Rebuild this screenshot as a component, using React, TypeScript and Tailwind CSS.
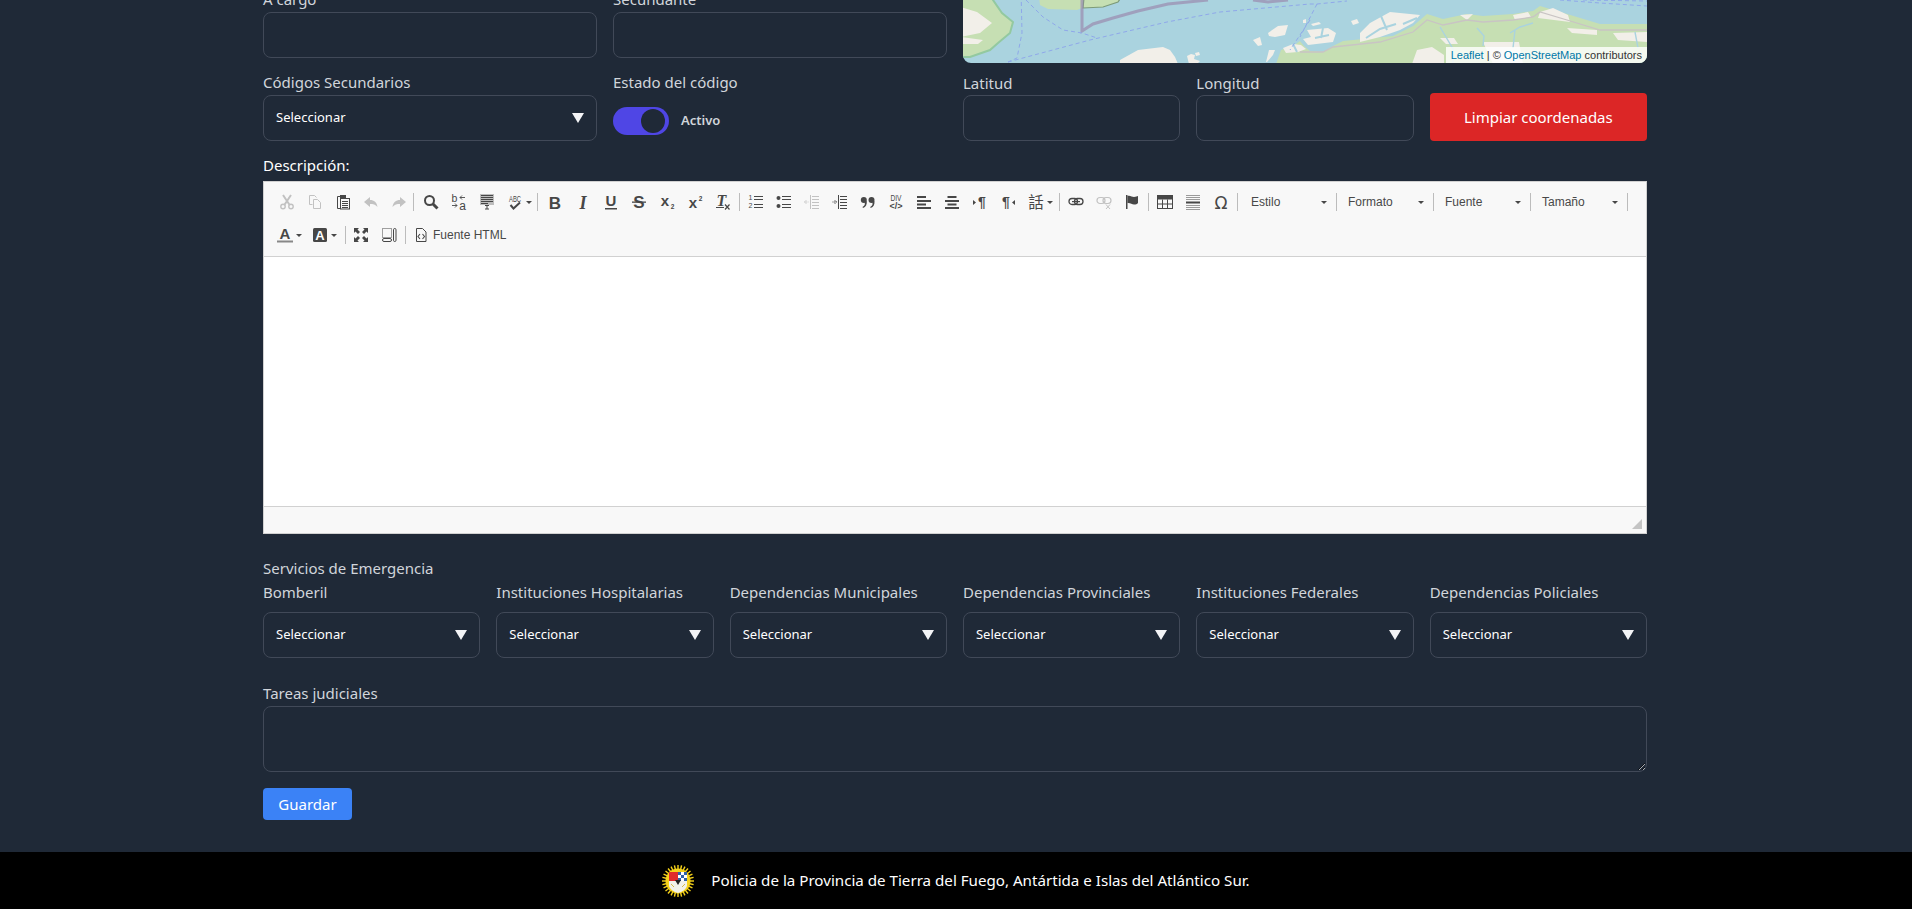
import React from "react";

const DARK = "#474747";
const MUTED = "#c2c2c2";

const Icon: React.FC<{ children: React.ReactNode; color?: string }> = ({ children, color = DARK }) => (
  <svg width="16" height="16" viewBox="0 0 16 16" fill={color} stroke="none" className="shrink-0">
    {children}
  </svg>
);

const Glyph: React.FC<{
  x: number;
  y: number;
  size: number;
  bold?: boolean;
  italic?: boolean;
  fit?: number;
  children: React.ReactNode;
  family?: string;
}> = ({ x, y, size, bold, italic, fit, children, family = "Liberation Sans, sans-serif" }) => (
  <text
    x={x}
    y={y}
    fontSize={size}
    fontWeight={bold ? 700 : 400}
    fontStyle={italic ? "italic" : "normal"}
    fontFamily={family}
    textAnchor="middle"
    textLength={fit}
    lengthAdjust={fit ? "spacingAndGlyphs" : undefined}
  >
    {children}
  </text>
);

const Caret = () => <span className="ml-[3px] h-0 w-0 border-x-[3px] border-t-[3px] border-x-transparent border-t-[#474747]" />;

const Tool: React.FC<{ children: React.ReactNode }> = ({ children }) => (
  <div className="flex h-7 w-7 shrink-0 items-center justify-center">{children}</div>
);

const ToolCaret: React.FC<{ children: React.ReactNode; className: string }> = ({ children, className }) => (
  <div className={`flex h-7 shrink-0 items-center ${className}`}>
    {children}
    <Caret />
  </div>
);

const Sep: React.FC<{ className?: string }> = ({ className = "mr-[3px]" }) => (
  <div className={`h-[18px] w-px shrink-0 bg-[#bcbcbc] ${className}`} />
);

const Combo: React.FC<{ label: string }> = ({ label }) => (
  <>
    <div className="flex h-7 w-[96px] shrink-0 items-center justify-between pl-[11px] pr-[9px] font-['Liberation_Sans'] text-xs text-[#484848]">
      <span>{label}</span>
      <span className="h-0 w-0 border-x-[3px] border-t-[3px] border-x-transparent border-t-[#474747]" />
    </div>
    <Sep className="" />
  </>
);

const Lines: React.FC<{ rows: [number, number, number][]; h?: number }> = ({ rows, h = 1 }) => (
  <>
    {rows.map(([x, y, w], i) => (
      <rect key={i} x={x} y={y} width={w} height={h} />
    ))}
  </>
);

const toolbarFirstRow = () => (
  <div className="flex h-7 items-center">
    <Tool>
      <Icon color={MUTED}>
        <g fill="none" stroke={MUTED} strokeWidth="1.4">
          <circle cx="4" cy="12.5" r="2.2" />
          <circle cx="12" cy="12.5" r="2.2" />
          <path d="M5.5 10.8 12 1M10.5 10.800 4 1" strokeWidth="2" />
        </g>
      </Icon>
    </Tool>
    <Tool>
      <Icon color={MUTED}>
        <path d="M2.500 1.500h5l2 2M2.500 1.500v9h3M6.500 5.500h4l3 3v6h-7z" fill="none" stroke={MUTED} />
      </Icon>
    </Tool>
    <Tool>
      <Icon>
        <path d="M5 2.500H2.500v12H5" fill="none" stroke={DARK} />
        <rect x="5" y="1" width="6" height="3" />
        <rect x="5.500" y="4.500" width="9" height="10.500" fill="none" stroke={DARK} />
        <Lines rows={[[7, 7, 6], [7, 9, 6], [7, 11, 6], [7, 13, 6]]} />
      </Icon>
    </Tool>
    <Tool>
      <Icon color={MUTED}>
        <path d="M7 3 1 8l6 5v-3c3 0 5.500.5 7.500 3C14 8.500 11 6 7 6z" />
      </Icon>
    </Tool>
    <Tool>
      <Icon color={MUTED}>
        <path d="M9 3l6 5-6 5v-3c-3 0-5.500.5-7.500 3C2 8.500 5 6 9 6z" />
      </Icon>
    </Tool>
    <Sep />
    <Tool>
      <Icon>
        <circle cx="6.500" cy="6.500" r="4.500" fill="none" stroke={DARK} strokeWidth="2" />
        <path d="M10 10l4.500 4.500" stroke={DARK} strokeWidth="3" />
      </Icon>
    </Tool>
    <Tool>
      <Icon>
        <Glyph x={3.500} y={8} size={10.500}>b</Glyph>
        <Glyph x={11.500} y={15.500} size={12}>a</Glyph>
        <path d="M9 3.500h5M9 3.500l2-2M9 3.500l2 2M1 11.500h5M6 11.500l-2-2M6 11.500l-2 2" fill="none" stroke={DARK} strokeWidth="0.900" />
      </Icon>
    </Tool>
    <Tool>
      <Icon>
        <rect x="1" y="0" width="14" height="11" fill="#bdbdbd" />
        <Lines rows={[[2, 1, 12], [2, 3, 12], [2, 5, 12], [2, 7, 12], [2, 9, 7]]} />
        <path d="M6 11.500h4M8 11.500v3.500M6 15h4" fill="none" stroke={DARK} />
      </Icon>
    </Tool>
    <ToolCaret className="w-9 pl-[6px]">
      <Icon>
        <Glyph x={8} y={7.500} size={9} fit={12}>ABC</Glyph>
        <path d="M3.500 11 6.500 14.500 13 8.500" fill="none" stroke={DARK} strokeWidth="2" />
      </Icon>
    </ToolCaret>
    <Sep />
    <Tool>
      <Icon>
        <Glyph x={8} y={14.500} size={17} bold>B</Glyph>
      </Icon>
    </Tool>
    <Tool>
      <Icon>
        <Glyph x={8} y={14.500} size={18} bold italic family="Liberation Serif, serif">I</Glyph>
      </Icon>
    </Tool>
    <Tool>
      <Icon>
        <Glyph x={8} y={12} size={15} bold>U</Glyph>
        <rect x="2" y="14" width="12" height="1.500" />
      </Icon>
    </Tool>
    <Tool>
      <Icon>
        <Glyph x={8} y={14} size={17} bold>S</Glyph>
        <rect x="1" y="7.500" width="14" height="1.300" />
      </Icon>
    </Tool>
    <Tool>
      <Icon>
        <Glyph x={6} y={12} size={15} bold>x</Glyph>
        <Glyph x={13.500} y={15} size={6.500} bold>2</Glyph>
      </Icon>
    </Tool>
    <Tool>
      <Icon>
        <Glyph x={6} y={14} size={15} bold>x</Glyph>
        <Glyph x={13.500} y={6.500} size={6.500} bold>2</Glyph>
      </Icon>
    </Tool>
    <Tool>
      <Icon>
        <Glyph x={6.500} y={11.500} size={16} bold italic family="Liberation Serif, serif">T</Glyph>
        <rect x="1" y="13" width="8" height="1" />
        <path d="M10 10.500l4.500 5M14.500 10.500 10 15.500" fill="none" stroke={DARK} strokeWidth="1.200" />
      </Icon>
    </Tool>
    <Sep className="ml-[2px] mr-[2px]" />
    <Tool>
      <Icon>
        <Glyph x={2.500} y={6} size={7}>1</Glyph>
        <Glyph x={2.500} y={14} size={7}>2</Glyph>
        <Lines rows={[[6, 2, 9], [6, 5, 9], [6, 10, 9], [6, 13, 9]]} />
      </Icon>
    </Tool>
    <Tool>
      <Icon>
        <circle cx="2.500" cy="4" r="2" />
        <circle cx="2.500" cy="12" r="2" />
        <Lines rows={[[6, 2, 9], [6, 5, 9], [6, 10, 9], [6, 13, 9]]} />
      </Icon>
    </Tool>
    <Tool>
      <Icon color={MUTED}>
        <Lines rows={[[8, 2, 7], [8, 5, 7], [8, 8, 7], [8, 11, 7], [8, 14, 7]]} />
        <rect x="6" y="1" width="1" height="14" />
        <path d="M0.500 8h4M0.500 8l2-2M0.500 8l2 2" fill="none" stroke={MUTED} strokeDasharray="1 0.600" />
      </Icon>
    </Tool>
    <Tool>
      <Icon>
        <Lines rows={[[8, 2, 7], [8, 5, 7], [8, 8, 7], [8, 11, 7], [8, 14, 7]]} />
        <rect x="6" y="1" width="1" height="14" />
        <path d="M0.500 8h4M4.500 8l-2-2M4.500 8l-2 2" fill="none" stroke={DARK} strokeDasharray="1 0.600" />
      </Icon>
    </Tool>
    <Tool>
      <Icon>
        <circle cx="3.800" cy="6" r="3" />
        <path d="M4.500 8.500C5.500 10 4.500 12 2.500 13L3 14C6 13 7 10.500 6.800 7z" />
        <circle cx="11.500" cy="6" r="3" />
        <path d="M12.200 8.500c1 1.500 0 3.500-2 4.500l.5 1c3-1 4-3.500 3.800-7z" />
      </Icon>
    </Tool>
    <Tool>
      <Icon>
        <Glyph x={8} y={7} size={9.500} fit={11}>DIV</Glyph>
        <Glyph x={8} y={15} size={8.500} bold fit={13}>{"</>"}</Glyph>
      </Icon>
    </Tool>
    <Tool>
      <Icon>
        <Lines h={2} rows={[[1, 2, 9], [1, 6, 14], [1, 9.500, 9], [1, 13, 14]]} />
      </Icon>
    </Tool>
    <Tool>
      <Icon>
        <Lines h={2} rows={[[3.500, 2, 9], [1, 6, 14], [3.500, 9.500, 9], [1, 13, 14]]} />
      </Icon>
    </Tool>
    <Tool>
      <Icon>
        <path d="M1 6l3 2.500L1 11z" />
        <Glyph x={10} y={13} size={14} bold>¶</Glyph>
      </Icon>
    </Tool>
    <Tool>
      <Icon>
        <path d="M15 6l-3 2.500 3 2.500z" />
        <Glyph x={6} y={13} size={14} bold>¶</Glyph>
      </Icon>
    </Tool>
    <ToolCaret className="w-9 pl-[6px]">
      <Icon>
        <Glyph x={8} y={14} size={15.500} family="Noto Sans CJK TC, sans-serif">話</Glyph>
      </Icon>
    </ToolCaret>
    <Sep className="ml-px mr-[2px]" />
    <Tool>
      <Icon>
        <rect x="1" y="4.500" width="8.500" height="6" rx="3" fill="none" stroke={DARK} strokeWidth="1.300" />
        <rect x="6.500" y="4.500" width="8.500" height="6" rx="3" fill="none" stroke={DARK} strokeWidth="1.300" />
        <rect x="4" y="7" width="8" height="1.200" />
      </Icon>
    </Tool>
    <Tool>
      <Icon color={MUTED}>
        <rect x="1" y="3.500" width="8" height="6" rx="3" fill="none" stroke={MUTED} strokeWidth="1.200" />
        <rect x="7" y="3.500" width="8" height="6" rx="3" fill="none" stroke={MUTED} strokeWidth="1.200" />
        <path d="M10 10.500l4 4.500M14 10.500l-4 4.500" fill="none" stroke={MUTED} />
      </Icon>
    </Tool>
    <Tool>
      <Icon>
        <rect x="2" y="1" width="1.500" height="14" />
        <path d="M3.500 2C6 1 8 3 10 3s3-1 4-1v7c-1 1-2 1.500-4 1.500S6 8.500 3.500 9z" />
      </Icon>
    </Tool>
    <Sep className="ml-[2px] mr-[2px]" />
    <Tool>
      <Icon>
        <rect x="0.500" y="1.500" width="15" height="13" fill="none" stroke={DARK} />
        <rect x="0.500" y="1.500" width="15" height="4" />
        <path d="M5.500 5.500v9M10.500 5.500v9M.5 10h15" fill="none" stroke={DARK} />
      </Icon>
    </Tool>
    <Tool>
      <Icon color="#9a9a9a">
        <Lines rows={[[1, 1, 14], [1, 3, 14], [1, 5, 14], [1, 11, 14], [1, 13, 14], [1, 15, 14]]} />
        <rect x="1" y="7.500" width="14" height="2" fill={DARK} />
      </Icon>
    </Tool>
    <Tool>
      <Icon>
        <Glyph x={8} y={14.500} size={17} family="DejaVu Sans, sans-serif">Ω</Glyph>
      </Icon>
    </Tool>
    <Sep className="ml-[2px] mr-[2px]" />
    <Combo label="Estilo" />
    <Combo label="Formato" />
    <Combo label="Fuente" />
    <Combo label="Tamaño" />
  </div>
);

const toolbarSecondRow = () => (
  <div className="mt-[5px] flex h-7 items-center">
    <ToolCaret className="w-9 pl-[4px]">
      <Icon>
        <Glyph x={8} y={12} size={15} bold>A</Glyph>
        <rect x="0" y="13.500" width="16" height="2" fill="#888" />
      </Icon>
    </ToolCaret>
    <ToolCaret className="w-9 pl-[3px]">
      <Icon>
        <rect x="1" y="1" width="14" height="14" rx="1.500" />
        <text x="8" y="13" fontSize="13" fontWeight="700" fill="#fff" textAnchor="middle" fontFamily="Liberation Sans, sans-serif">
          A
        </text>
      </Icon>
    </ToolCaret>
    <Sep className="mr-[1px]" />
    <Tool>
      <Icon>
        <path d="M1 1h5L4.500 2.500 7 5 5 7 2.500 4.500 1 6zM15 1v5l-1.500-1.500L11 7 9 5l2.500-2.500L10 1zM1 15v-5l1.500 1.500L5 9l2 2-2.500 2.500L6 15zM15 15h-5l1.500-1.500L9 11l2-2 2.500 2.500L15 10z" />
      </Icon>
    </Tool>
    <Tool>
      <Icon>
        <rect x="1.500" y="1.500" width="9" height="9" fill="none" stroke={DARK} strokeDasharray="1 1" />
        <rect x="1.500" y="11.500" width="9" height="3" rx="1.500" fill="none" stroke={DARK} />
        <rect x="12.500" y="1.500" width="2.500" height="13" rx="1.200" fill="none" stroke={DARK} />
      </Icon>
    </Tool>
    <Sep className="ml-[2px]" />
    <div className="ml-[7px] flex h-7 items-center gap-1 font-['Liberation_Sans'] text-xs text-[#484848]">
      <Icon>
        <path d="M3.500 1.500h6l3.500 3.500v9.500h-9.500z" fill="none" stroke={DARK} />
        <path d="M7 7 5 9.500 7 12M9.500 7l2 2.500-2 2.500" fill="none" stroke={DARK} strokeWidth="1.100" />
      </Icon>
      <span>Fuente HTML</span>
    </div>
  </div>
);

const MapPreview = () => (
  <div className="relative h-[75px] overflow-hidden rounded-lg bg-[#aad3df]">
    <svg viewBox="0 -12 684 75" width="684" height="75" className="block">
      <g fill="#c6dfb3">
        <path d="M-2-12H26L30 0l9 13 11 9-3 11-12 10-8 7-20 7H-2z" stroke="#93c9a0" strokeWidth="2" />
        <path d="M75-12H120V0l-1 8-5 2-29-1-8-4z" />
        <path d="M120 8l20-1 15-5 4-6v-8H122z" stroke="#7c9a78" strokeWidth="1.200" />
        <path d="M313 64l5-14 12-4 7-5 4 5 6 5 13 1 10-6 10-5 50-5 20-10 14-12 16 5 24-5 16 2 30-2 20-3 7-5 27 8 33 10 47 0V64z" />
      </g>
      <g fill="#f2efe9">
        <path d="M-2 7 14 12l15 11-12 10-19 4zM-2 37l22 3-5 4H-2z" />
        <path d="M157 64v-4l18-10 25-3 7 3 5 7 3 7zM224 56l4-2 4 1-1 4 6 2-3 3h-8zM232 53l4-1 1 3-4 1z" />
        <path d="M305 33l10-7 10-1-3 10-10 2-6-1zM290 40l7-3 2 8-4 1zM303 62l3-12 6 0-2 5-6 7zM340 20l3-1 0 4-3 0z" />
        <path d="M320 48l10-4 8 1 5 4-8 3-12 1zM344 30l21-2 8 5-3 9-25 3-5-6 8-2zM348 24l8-2 2 2-8 2z" />
        <path d="M397 33l10-10 20-11 10 1 20 2-7 8-13 7-20 7-20 5zM388 21l6-2 2 4-6 2z" />
        <path d="M497 15l13-1-6 6zM550 15l15-3 3 5-16 3zM577 12l13-4 15 7 2 7-32-4z" />
        <path d="M449 64l5-14 15-3 12 8v9zM520 42l36 0 4 22-30 0zM650 33l34-1v10l-29-2zM604 28l30 2 0 5-25-2zM477 38l14 0 4 6-12 0z" />
      </g>
      <g fill="none" stroke="#aad3df" strokeWidth="2">
        <path d="M403 38l14-9 16-5M418 16l6 14M440 24l14-6M352 38l14-3M360 28l-2 10M330 44l4 8" />
      </g>
      <g fill="none" stroke="#c9c4c4" strokeWidth="1.300">
        <path d="M337 52l23 0 10-5 47-5 33-10 14-12 16 5 24-5 16 2 30-2 20-3 7-5 27 8 33 10h47" />
      </g>
      <g fill="none" stroke="#aad3df" strokeWidth="1.400">
        <path d="M477 27l6 10 7 12v14M514 28l7 8-1 10M547 33l10-6 13-4M552 30l-2 18M672 32l3 16" />
      </g>
      <g fill="none" stroke="#9a8aae" strokeOpacity=".7" strokeWidth="3">
        <path d="M119-12V31l11-7 20-6 25-7 30-7 40-4M290 0l15 2 20-2" />
      </g>
      <g fill="none" stroke="#8fa8ea" strokeWidth="1" strokeDasharray="4 3">
        <path d="M58-12l1 45-5 25-9 4M63 0l17 17 20 13 19 3 15 5M45 62l82-22 77-18 53-10 90-8h7l30-3M354 4l-17 33M347 20l-20 30M597 0l40 3 47 3M620 0l64 1" />
      </g>
    </svg>
    <div className="absolute bottom-0 right-0 bg-white/80 px-[5px] font-['Liberation_Sans'] text-[11px] leading-[16px] text-[#333]">
      <span className="text-[#0078a8]">Leaflet</span> | © <span className="text-[#0078a8]">OpenStreetMap</span> contributors
    </div>
  </div>
);

const Logo = () => (
  <svg width="32" height="32" viewBox="0 0 32 32" className="shrink-0">
    {Array.from({ length: 28 }).map((_, i) => (
      <rect key={i} x="15.300" y="0" width="1.400" height="6" fill="#f6d21a" transform={`rotate(${(i * 360) / 28} 16 16)`} />
    ))}
    <circle cx="16" cy="16" r="12.500" fill="#f6d21a" />
    <path d="M7 7h9v10H7z" fill="#e02c2c" />
    <path d="M16 7h9v10h-9z" fill="#fff" />
    <path d="M16 7h3v3h-3zM22 7h3v3h-3zM19 10h3v3h-3zM16 13h3v3h-3zM22 13h3v3h-3z" fill="#2f5fa8" />
    <path d="M7 16h18v4c0 4-5 7-9 8-4-1-9-4-9-8z" fill="#f2f2ea" />
    <path d="M13 15l3 5 3-5z" fill="#222" />
    <path d="M9 19l3 3M23 19l-3 3" stroke="#d8b84a" />
  </svg>
);

const fieldClass = "block h-[46px] w-full rounded-lg border border-[#414958] bg-[#1f2937]";

const Field: React.FC<{ label: string }> = ({ label }) => (
  <div>
    <label className="block h-6 leading-[22px] text-[#d1d5db]">{label}</label>
    <input className={fieldClass} />
  </div>
);

const Select: React.FC = () => (
  <div className={`${fieldClass} flex items-center justify-between pl-[12px] pr-[12px]`}>
    <span className="text-[13px] text-white">Seleccionar</span>
    <svg width="12" height="10" viewBox="0 0 12 10">
      <path d="M0 0h12L6 10z" fill="#f3f4f6" />
    </svg>
  </div>
);

const emergencyFields = [
  "Bomberil",
  "Instituciones Hospitalarias",
  "Dependencias Municipales",
  "Dependencias Provinciales",
  "Instituciones Federales",
  "Dependencias Policiales",
];

export default function App() {
  return (
    <div className="flex h-[909px] flex-col overflow-hidden bg-[#1f2937] font-['Noto_Sans',sans-serif] text-[15px]">
      <main className="ml-[263px] mt-[-12px] w-[1384px] flex-1">
        <div className="grid grid-cols-2 gap-x-4">
          <div className="grid grid-cols-2 gap-x-4 gap-y-3">
            <Field label="A cargo" />
            <Field label="Secundante" />
            <div>
              <label className="block h-6 leading-[22px] text-[#d1d5db]">Códigos Secundarios</label>
              <Select />
            </div>
            <div>
              <label className="block h-6 leading-[22px] text-[#d1d5db]">Estado del código</label>
              <div className="mt-3 flex items-center gap-3">
                <div className="flex h-7 w-14 items-center justify-end rounded-full bg-[#4f46e5] pr-[4px]">
                  <span className="h-6 w-6 rounded-full bg-[#1f2937]" />
                </div>
                <span className="text-[13px] font-semibold text-[#d1d5db]">Activo</span>
              </div>
            </div>
          </div>
          <div>
            <MapPreview />
            <div className="mt-[9px] grid grid-cols-3 items-end gap-x-4">
              <div>
                <label className="block h-[23px] leading-[22px] text-[#d1d5db]">Latitud</label>
                <input className={fieldClass} />
              </div>
              <div>
                <label className="block h-[23px] leading-[22px] text-[#d1d5db]">Longitud</label>
                <input className={fieldClass} />
              </div>
              <button className="h-12 rounded bg-[#dc2626] text-white">Limpiar coordenadas</button>
            </div>
          </div>
        </div>

        <label className="mt-[13px] block h-6 leading-[22px] text-white">Descripción:</label>
        <div className="mt-[3px] flex h-[353px] flex-col border border-[#d1d1d1] bg-white">
          <div className="h-[75px] border-b border-[#d1d1d1] bg-[#f8f8f8] pl-[9px] pt-[6px]">
            {toolbarFirstRow()}
            {toolbarSecondRow()}
          </div>
          <div className="flex-1" />
          <div className="flex h-[27px] items-end justify-end border-t border-[#d1d1d1] bg-[#f8f8f8] p-[4px]">
            <svg width="10" height="10" viewBox="0 0 10 10">
              <path d="M10 0v10H0z" fill="#c4c4c4" />
            </svg>
          </div>
        </div>

        <div className="mt-[23px] h-6 leading-[22px] text-[#d1d5db]">Servicios de Emergencia</div>
        <div className="grid grid-cols-6 gap-x-4">
          {emergencyFields.map((name) => (
            <div key={name}>
              <label className="mb-[7px] block h-6 leading-[22px] text-[#d1d5db]">{name}</label>
              <Select />
            </div>
          ))}
        </div>

        <label className="mt-[25px] block h-[23px] leading-[21px] text-[#d1d5db]">Tareas judiciales</label>
        <textarea className="block h-[66px] w-full rounded-lg border border-[#414958] bg-[#1f2937]" />
        <button className="mt-4 block h-8 w-[89px] rounded bg-[#3b82f6] text-white">Guardar</button>
      </main>
      <footer className="flex h-[57px] items-center justify-center gap-[17px] bg-black text-[15.15px] text-white">
        <Logo />
        <span>Policia de la Provincia de Tierra del Fuego, Antártida e Islas del Atlántico Sur.</span>
      </footer>
    </div>
  );
}
